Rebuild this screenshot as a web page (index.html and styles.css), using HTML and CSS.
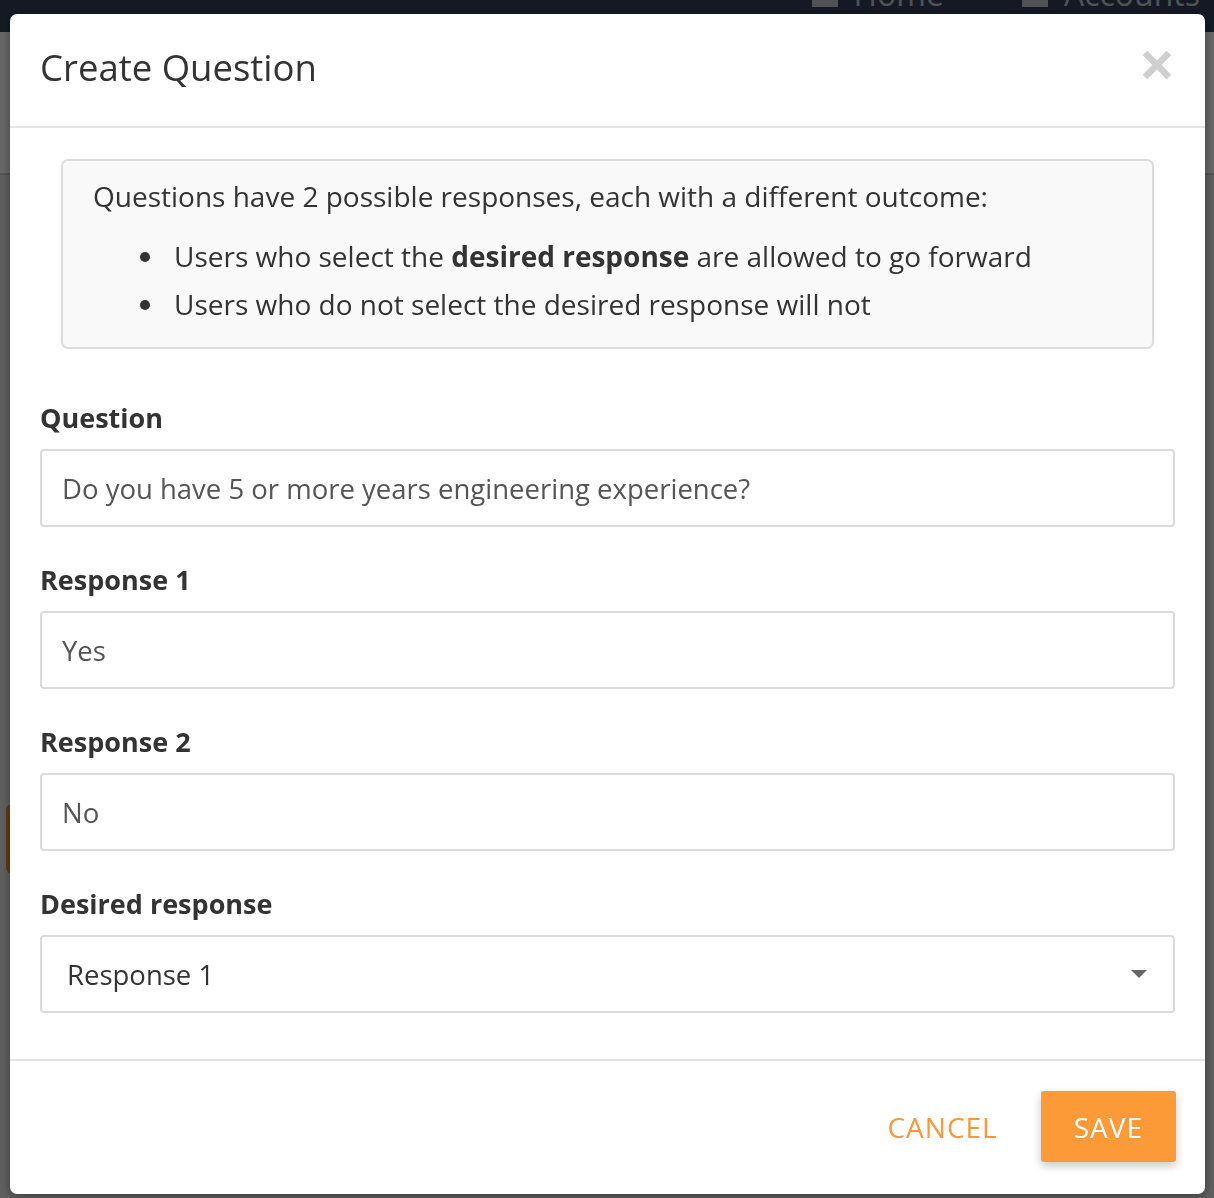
FILE: index.html
```html
<!DOCTYPE html>
<html lang="en">
<head>
<meta charset="utf-8">
<title>Create Question</title>
<link rel="stylesheet" href="styles.css">
</head>
<body>
<div class="page">
  <nav class="navbar">
    <span class="nav-item"><span class="nav-icon"></span>Home</span>
    <span class="nav-item"><span class="nav-icon"></span>Accounts</span>
  </nav>
  <div class="page-head"><span class="page-title">Content list</span></div>
  <div class="page-main">
    <div class="panel"></div>
    <div class="section-title">Filters</div>
    <div class="orange-btn"></div>
    <div class="card"></div>
  </div>
</div>

<div class="overlay">
  <div class="modal">
    <div class="modal-header">
      <h1 class="modal-title">Create Question</h1>
      <button class="close" aria-label="Close">
        <svg width="30" height="30" viewBox="0 0 30 30"><path d="M3 3 L27 27 M27 3 L3 27" stroke="#cfcfcf" stroke-width="6.5" fill="none"/></svg>
      </button>
    </div>
    <div class="modal-body">
      <div class="info">
        <p>Questions have 2 possible responses, each with a different outcome:</p>
        <ul>
          <li>Users who select the <strong>desired response</strong> are allowed to go forward</li>
          <li>Users who do not select the desired response will not</li>
        </ul>
      </div>
      <div class="field">
        <label class="label">Question</label>
        <div class="input">Do you have 5 or more years engineering experience?</div>
      </div>
      <div class="field">
        <label class="label">Response 1</label>
        <div class="input">Yes</div>
      </div>
      <div class="field">
        <label class="label">Response 2</label>
        <div class="input">No</div>
      </div>
      <div class="field">
        <label class="label">Desired response</label>
        <div class="input select"><span>Response 1</span><span class="caret"></span></div>
      </div>
    </div>
    <div class="modal-footer">
      <button class="btn btn-link">CANCEL</button>
      <button class="btn btn-primary">SAVE</button>
    </div>
  </div>
</div>
</body>
</html>
```
FILE: styles.css
```css
* { box-sizing: border-box; }
html, body { margin: 0; padding: 0; }
body {
  font-family: "Open Sans", "Liberation Sans", sans-serif;
  background: #ececec;
  color: #333;
  height: 1198px;
  overflow: hidden;
}

/* underlying page */
.page { width: 1214px; }
.navbar {
  height: 32px;
  background: #33405a;
  display: flex;
  justify-content: flex-end;
  align-items: flex-start;
  gap: 78px;
  padding-right: 14px;
  overflow: hidden;
}
.nav-item {
  color: #c9ced8;
  font-size: 32px;
  line-height: 32px;
  height: 32px;
  margin-top: -22px;
  display: flex;
  align-items: center;
  gap: 16px;
}
.nav-icon { width: 26px; height: 26px; background: #c9ced8; display: inline-block; }
.page-head {
  height: 143px;
  background: #ffffff;
  border-bottom: 2px solid #cfcfcf;
  padding: 48px 0 0 0;
  overflow: hidden;
}
.page-title { font-size: 40px; color: #222; margin-left: -280px; }
.page-main { padding: 0 14px 0 12px; }
.panel { height: 540px; border: 2px solid #bdbdbd; background: #f4f4f4; }
.section-title { font-weight: 700; font-size: 30px; margin: 40px 0 0 2px; color: #111; }
.orange-btn { width: 120px; height: 70px; background: #f39230; border-radius: 6px; margin-top: 8px; margin-left: -6px; }
.card { height: 300px; background: #fafafa; border-radius: 12px; margin-top: 40px; }

/* overlay + modal */
.overlay {
  position: fixed;
  inset: 0;
  background: rgba(0, 0, 0, 0.6);
  padding: 14px 9px 4px 10px;
}
.modal {
  width: 1195px;
  height: 1180px;
  background: #fff;
  border-radius: 7px;
  box-shadow: 0 3px 9px rgba(0,0,0,0.4);
  display: flex;
  flex-direction: column;
}
.modal-header {
  height: 114px;
  border-bottom: 2px solid #e5e5e5;
  display: flex;
  align-items: center;
  justify-content: space-between;
  padding: 0 33px 6px 30px;
}
.modal-title {
  margin: 0;
  font-size: 36.5px;
  font-weight: 500;
  color: #333;
  line-height: 50px;
}
.close {
  border: 0;
  background: none;
  padding: 0;
  margin-top: -4px;
  width: 30px;
  height: 30px;
  display: block;
}
.close svg { display: block; }

.modal-body {
  padding: 31px 30px 46px;
  border-bottom: 2px solid #e5e5e5;
}
.info {
  margin: 0 21px 51px 21px;
  background: #f9f9f9;
  border: 2px solid #dcdcdc;
  border-radius: 7px;
  padding: 11px 30px 19px;
  font-size: 28px;
  color: #333;
}
.info p { margin: 0 0 12px; line-height: 48px; }
.info ul { margin: 0; padding-left: 81px; list-style: none; }
.info li { line-height: 48px; }
.info li::before {
  content: "";
  display: inline-block;
  width: 10px;
  height: 10px;
  border-radius: 50%;
  background: #333;
  margin-left: -34px;
  margin-right: 24px;
  vertical-align: 5px;
}
.info strong { font-weight: 700; }

.field { margin-bottom: 35px; }
.field:last-child { margin-bottom: 0; }
.label {
  display: block;
  font-size: 27px;
  font-weight: 700;
  line-height: 36px;
  color: #333;
  margin-bottom: 13px;
}
.input {
  height: 78px;
  border: 2px solid #dbdbdb;
  border-radius: 4px;
  padding: 0 20px;
  font-size: 27.5px;
  color: #555;
  display: flex;
  align-items: center;
}
.select {
  padding: 0 26px 0 25px;
  color: #333;
  justify-content: space-between;
}
.caret {
  width: 0;
  height: 0;
  border-left: 8px solid transparent;
  border-right: 8px solid transparent;
  border-top: 8px solid #666;
}

.modal-footer {
  flex: 1;
  display: flex;
  justify-content: flex-end;
  align-items: flex-start;
  gap: 10px;
  padding: 30px 29px 0 30px;
}
.btn {
  font-family: "Open Sans", "Liberation Sans", sans-serif;
  font-size: 28px;
  letter-spacing: 1px;
  height: 71px;
  padding: 0 33px;
  border: 0;
  border-radius: 3px;
  cursor: pointer;
}
.btn-link { background: none; color: #f7993b; }
.btn-primary {
  background: #fd9a38;
  color: #fff;
  box-shadow: 0 4px 10px rgba(0,0,0,0.22);
}
```
